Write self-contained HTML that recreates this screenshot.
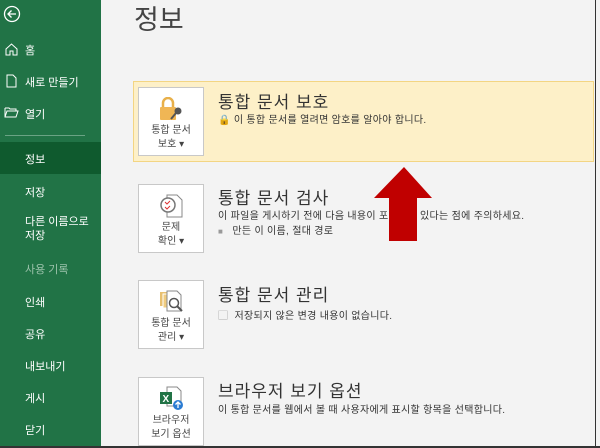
<!DOCTYPE html>
<html><head><meta charset="utf-8"><style>
*{margin:0;padding:0;box-sizing:border-box}
body{width:600px;height:448px;overflow:hidden;background:#f3f3f3;font-family:"Liberation Sans","Noto Sans CJK KR",sans-serif;position:relative}
.side{position:absolute;left:0;top:0;width:101px;height:448px;background:#217346;color:#fff;font-size:11px}
.side div{position:absolute;left:25px}
.abs{position:absolute}
.btn{position:absolute;left:138px;width:66px;height:69px;background:#fff;border:1px solid #c8c8c8;font-size:10px;color:#444;text-align:center;line-height:14px}
.btn .t{position:absolute;left:0;right:0;top:36px}
h2{position:absolute;left:218px;font-size:17px;font-weight:normal;color:#333;letter-spacing:1px}
.d{position:absolute;left:218px;font-size:10px;color:#333;letter-spacing:0.3px}
</style></head><body>
<div class="side">
<svg class="abs" style="left:3px;top:5px" width="18" height="18"><circle cx="9" cy="9" r="7.5" fill="none" stroke="#fff" stroke-width="1.3"/><path d="M13 9H5M8.5 5.5L5 9l3.5 3.5" fill="none" stroke="#fff" stroke-width="1.3"/></svg>
<svg class="abs" style="left:5px;top:43px" width="13" height="13"><path d="M1 6L6.5 1 12 6V12H8V8H5V12H1Z" fill="none" stroke="#fff"/></svg>
<div style="top:42px">홈</div>
<svg class="abs" style="left:6px;top:74px" width="11" height="14"><path d="M1 1H7L10 4V13H1Z" fill="none" stroke="#fff"/></svg>
<div style="top:74px">새로 만들기</div>
<svg class="abs" style="left:4px;top:107px" width="15" height="11"><path d="M1 1H5L6 2H12V4M1 1V10H12L14 4H3L1 10" fill="none" stroke="#fff"/></svg>
<div style="top:106px">열기</div>
<div style="left:5px;top:135px;width:80px;height:1px;background:#6aa384"></div>
<div style="left:0;top:142px;width:101px;height:32px;background:#0f5a2e"></div>
<div style="top:151px">정보</div>
<div style="top:184px">저장</div>
<div style="top:215px;line-height:14px">다른 이름으로<br>저장</div>
<div style="top:261px;color:#9bc2ab">사용 기록</div>
<div style="top:294px">인쇄</div>
<div style="top:326px">공유</div>
<div style="top:358px">내보내기</div>
<div style="top:390px">게시</div>
<div style="top:422px">닫기</div>
</div>
<div class="abs" style="left:134px;top:-2px;font-size:27px;color:#444">정보</div>

<div class="abs" style="left:133px;top:81px;width:461px;height:81px;background:#fdf0c8;border:1px solid #f3d583"></div>
<div class="btn" style="top:87px"><svg class="abs" style="left:20px;top:9px" width="26" height="24"><path d="M4 10V6a5 5 0 0110 0v4" fill="none" stroke="#e8b04a" stroke-width="2.5"/><rect x="1" y="10" width="16" height="13" rx="1" fill="#f0b655"/><circle cx="19" cy="14" r="3.5" fill="#555"/><path d="M17 16l-5 6" stroke="#555" stroke-width="2"/></svg><div class="t">통합 문서<br>보호 ▾</div></div>
<h2 style="top:88px">통합 문서 보호</h2>
<div class="d" style="top:111px"><span style="color:#e8b04a">🔒</span> 이 통합 문서를 열려면 암호를 알아야 합니다.</div>

<div class="btn" style="top:184px"><svg class="abs" style="left:20px;top:8px" width="26" height="26"><path d="M8 2H18L23 7V24H8Z" fill="#fff" stroke="#888"/><circle cx="9" cy="12" r="7" fill="#fff" stroke="#777" stroke-width="1.5"/><path d="M6 9l2 2 3-3M6 14l2 2 3-3" stroke="#d33" fill="none"/></svg><div class="t">문제<br>확인 ▾</div></div>
<h2 style="top:184px">통합 문서 검사</h2>
<div class="d" style="top:207px">이 파일을 게시하기 전에 다음 내용이 포함되어 있다는 점에 주의하세요.</div>
<div class="d" style="top:222px"><span style="color:#999;font-size:8px">■</span>&nbsp;&nbsp;&nbsp;만든 이 이름, 절대 경로</div>

<div class="btn" style="top:280px"><svg class="abs" style="left:20px;top:8px" width="26" height="26"><rect x="1" y="3" width="10" height="14" fill="#e8c070"/><rect x="4" y="5" width="10" height="14" fill="#f0cc80" stroke="#fff"/><path d="M8 2H18L22 6V22H8Z" fill="#fff" stroke="#888"/><circle cx="15" cy="14" r="4.5" fill="#fff" stroke="#555" stroke-width="1.5"/><path d="M18 17l5 5" stroke="#555" stroke-width="2"/></svg><div class="t">통합 문서<br>관리 ▾</div></div>
<h2 style="top:281px">통합 문서 관리</h2>
<div class="d" style="top:307px"><span style="color:#999">▢</span>&nbsp; 저장되지 않은 변경 내용이 없습니다.</div>

<div class="btn" style="top:377px"><svg class="abs" style="left:20px;top:8px" width="26" height="26"><path d="M8 1H18L22 5V20H8Z" fill="#fff" stroke="#888"/><rect x="1" y="6" width="12" height="12" fill="#217346"/><text x="3.5" y="16" font-size="10" font-weight="bold" fill="#fff" font-family="Liberation Sans">X</text><circle cx="19" cy="19" r="5" fill="#2b7cd3"/><path d="M19 22v-6M16.5 18.5L19 16l2.5 2.5" stroke="#fff" fill="none" stroke-width="1.3"/></svg><div class="t">브라우저<br>보기 옵션</div></div>
<h2 style="top:377px">브라우저 보기 옵션</h2>
<div class="d" style="top:401px">이 통합 문서를 웹에서 볼 때 사용자에게 표시할 항목을 선택합니다.</div>

<svg class="abs" style="left:372px;top:167px" width="64" height="78"><path d="M32 0L60 31H45V74H17V31H2Z" fill="#c00000"/></svg>
<div class="abs" style="left:595px;top:0;width:1px;height:448px;background:#333"></div>
<div class="abs" style="left:0;top:446px;width:600px;height:2px;background:#333"></div>
</body></html>
